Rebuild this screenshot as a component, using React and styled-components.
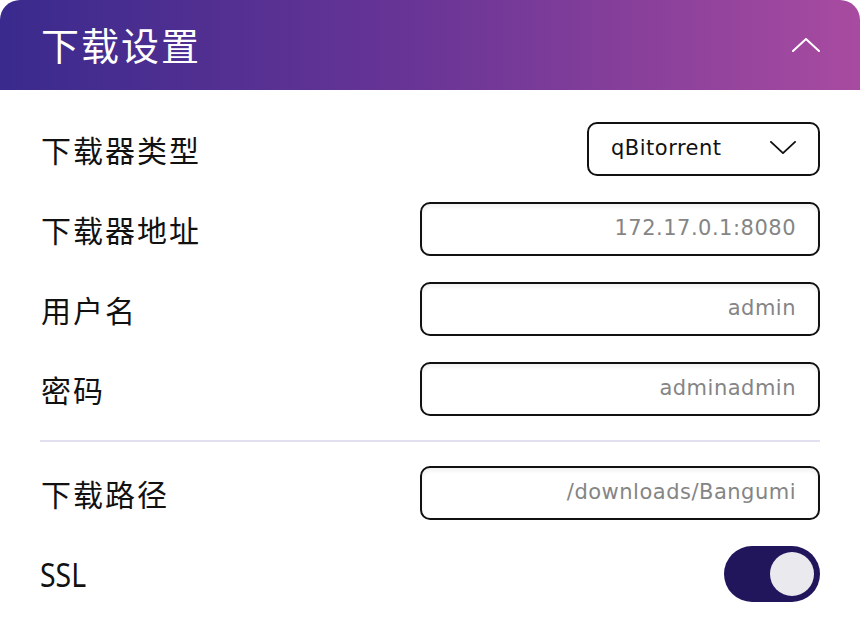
import styled, { createGlobalStyle } from "styled-components";

const GlobalStyle = createGlobalStyle`
  html, body {
    margin: 0;
    padding: 0;
    background: #fff;
  }
  body {
    font-family: "DejaVu Sans", "Noto Sans CJK SC", sans-serif;
  }
`;

const Card = styled.section`
  width: 860px;
  background: #fff;
  border-radius: 20px 20px 0 0;
  overflow: hidden;
`;

const Header = styled.header`
  height: 90px;
  box-sizing: border-box;
  padding: 0 40px 0 41px;
  display: flex;
  align-items: center;
  justify-content: space-between;
  background: linear-gradient(90deg, #3a2a8d 0%, #6a3596 50%, #a84ba0 100%);
  color: #fff;

  h1 {
    margin: 0;
    font-size: 38px;
    font-weight: 400;
    letter-spacing: 2px;
    font-family: "Noto Sans CJK SC", sans-serif;
    line-height: 1;
    padding-bottom: 2px;
  }
`;

const Body = styled.div`
  padding: 32px 40px 0 40px;
  display: flex;
  flex-direction: column;
`;

const Row = styled.div`
  height: ${(p) => p.$h ?? 54}px;
  display: flex;
  align-items: center;
  justify-content: space-between;
  margin-bottom: ${(p) => p.$gap ?? 26}px;
`;

const Label = styled.span`
  font-family: "Noto Sans CJK SC", sans-serif;
  font-size: 30px;
  color: #111;
  letter-spacing: 2px;
  padding-left: 1px;
`;

const SslLabel = styled.span`
  font-family: "Noto Sans", sans-serif;
  font-size: 33px;
  color: #111;
  transform: scaleX(0.86);
  transform-origin: left center;
`;

const Field = styled.div`
  width: 400px;
  height: 54px;
  box-sizing: border-box;
  border: 2px solid #111;
  border-radius: 10px;
  padding: 0 22px 2px;
  display: flex;
  align-items: center;
  justify-content: flex-end;
  box-shadow: inset 0 3px 4px rgba(0, 0, 0, 0.06);
  font-size: 21px;
  letter-spacing: 0.5px;
  color: #858585;
`;

const Select = styled.div`
  width: 233px;
  height: 54px;
  box-sizing: border-box;
  border: 2px solid #111;
  border-radius: 10px;
  padding: 0 22px 3px 22px;
  display: flex;
  align-items: center;
  justify-content: space-between;
  font-size: 21px;
  letter-spacing: 0.5px;
  color: #111;
`;

const Divider = styled.hr`
  border: 0;
  height: 2px;
  background: #e2e0f0;
  margin: 0 0 24px;
`;

const Toggle = styled.div`
  width: 96px;
  height: 56px;
  box-sizing: border-box;
  border-radius: 28px;
  background: #21155c;
  padding: 6px;
  display: flex;
  justify-content: ${(p) => (p.$on ? "flex-end" : "flex-start")};
  align-items: center;
`;

const Knob = styled.div`
  width: 44px;
  height: 44px;
  border-radius: 50%;
  background: #eae9ed;
`;

const Chevron = ({ up, size = 28, color = "#fff", width = 2 }) => (
  <svg width={size} height={size / 2} viewBox="0 0 28 14" fill="none">
    <path
      d={up ? "M1 13 L14 1 L27 13" : "M1 1 L14 13 L27 1"}
      stroke={color}
      strokeWidth={width}
      strokeLinecap="round"
      strokeLinejoin="round"
    />
  </svg>
);

const fields = [
  { label: "下载器地址", value: "172.17.0.1:8080" },
  { label: "用户名", value: "admin" },
  { label: "密码", value: "adminadmin" },
];

export default function App() {
  return (
    <>
      <GlobalStyle />
      <Card>
        <Header>
          <h1>下载设置</h1>
          <Chevron up />
        </Header>
        <Body>
          <Row>
            <Label>下载器类型</Label>
            <Select>
              <span>qBitorrent</span>
              <Chevron size={26} color="#111" width={2} />
            </Select>
          </Row>
          {fields.map((f, i) => (
            <Row key={f.label} $gap={i === fields.length - 1 ? 24 : 26}>
              <Label>{f.label}</Label>
              <Field>{f.value}</Field>
            </Row>
          ))}
          <Divider />
          <Row>
            <Label>下载路径</Label>
            <Field>/downloads/Bangumi</Field>
          </Row>
          <Row $h={56} $gap={30}>
            <SslLabel>SSL</SslLabel>
            <Toggle $on>
              <Knob />
            </Toggle>
          </Row>
        </Body>
      </Card>
    </>
  );
}
